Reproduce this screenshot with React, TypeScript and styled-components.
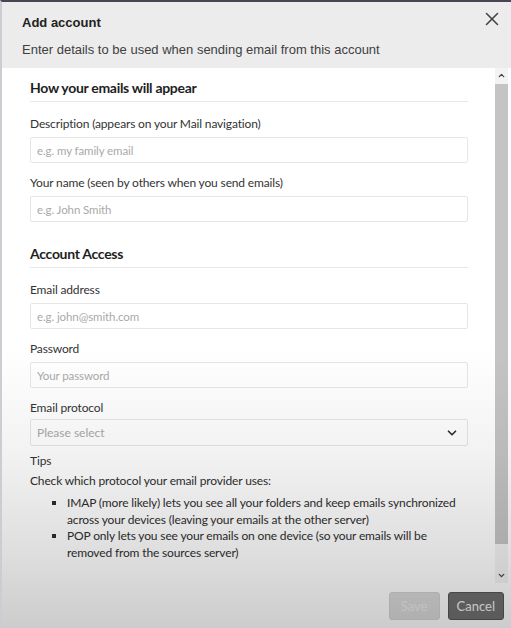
import React from 'react';
import styled, { createGlobalStyle } from 'styled-components';
import { X, ChevronDown, ChevronUp } from 'lucide-react';

const GlobalStyle = createGlobalStyle`
    html, body {
        margin: 0;
        padding: 0;
        background: #ffffff;
    }
    * {
        box-sizing: border-box;
    }
`

type FieldProps = {
    label: string;
    placeholder: string;
}

const Field: React.FunctionComponent<FieldProps> = ({label, placeholder}: FieldProps) => (
    <FieldBox>
        <Label>{label}</Label>
        <Input placeholder={placeholder} />
    </FieldBox>
)

const App: React.FunctionComponent = () => {
    return (
        <>
            <GlobalStyle />
            <Dialog>
                <Header>
                    <TitleRow>
                        <Title>Add account</Title>
                        <CloseButton aria-label='Close'>
                            <X size={22} strokeWidth={1.7} />
                        </CloseButton>
                    </TitleRow>
                    <Subtitle>Enter details to be used when sending email from this account</Subtitle>
                </Header>
                <Body>
                    <Content>
                        <Section>
                            <SectionTitle>How your emails will appear</SectionTitle>
                            <Field label='Description (appears on your Mail navigation)' placeholder='e.g. my family email' />
                            <Field label='Your name (seen by others when you send emails)' placeholder='e.g. John Smith' />
                        </Section>
                        <Section $spaced>
                            <SectionTitle>Account Access</SectionTitle>
                            <Field label='Email address' placeholder='e.g. john@smith.com' />
                            <Field label='Password' placeholder='Your password' />
                            <FieldBox>
                                <Label>Email protocol</Label>
                                <Select>
                                    <span>Please select</span>
                                    <ChevronDown size={14} strokeWidth={3} color='#333' />
                                </Select>
                            </FieldBox>
                        </Section>
                        <Tips>
                            <Label>Tips</Label>
                            <TipText>Check which protocol your email provider uses:</TipText>
                            <TipList>
                                <li>IMAP (more likely) lets you see all your folders and keep emails synchronized across your devices (leaving your emails at the other server)</li>
                                <li>POP only lets you see your emails on one device (so your emails will be removed from the sources server)</li>
                            </TipList>
                        </Tips>
                    </Content>
                    <Scrollbar>
                        <ScrollArrow><ChevronUp size={9} strokeWidth={3.5} /></ScrollArrow>
                        <ScrollTrack>
                            <Thumb />
                        </ScrollTrack>
                        <ScrollArrow><ChevronDown size={9} strokeWidth={3.5} /></ScrollArrow>
                    </Scrollbar>
                </Body>
                <Footer>
                    <Button disabled>Save</Button>
                    <Button $primary>Cancel</Button>
                </Footer>
            </Dialog>
        </>
    )
}

const Dialog = styled.div`
    position: relative;
    width: 511px;
    height: 628px;
    display: flex;
    flex-direction: column;
    background: #ffffff;
    border-top: 2px solid #4b4452;
    border-left: 2px solid #cfcbd3;
    overflow: hidden;

    &::after {
        content: '';
        position: absolute;
        inset: 0;
        pointer-events: none;
        background: linear-gradient(
            to bottom,
            rgba(0, 0, 0, 0) 0%,
            rgba(0, 0, 0, 0) 55%,
            rgba(0, 0, 0, 0.05) 72%,
            rgba(0, 0, 0, 0.13) 88%,
            rgba(0, 0, 0, 0.2) 100%
        );
    }
`

const Header = styled.div`
    height: 66px;
    flex-shrink: 0;
    background: #ececec;
    padding: 11px 8px 0 20px;
    font-family: "Liberation Sans", Arial, sans-serif;
`

const TitleRow = styled.div`
    display: flex;
    justify-content: space-between;
    align-items: center;
    height: 18px;
`

const Title = styled.div`
    font-size: 13px;
    font-weight: bold;
    color: #222;
`

const CloseButton = styled.button`
    border: none;
    background: none;
    padding: 0;
    display: flex;
    color: #444;
    margin-top: -6px;
`

const Subtitle = styled.div`
    margin-top: 11px;
    font-size: 13px;
    color: #3f3f3f;
`

const Body = styled.div`
    flex: 1;
    display: flex;
    min-height: 0;
`

const Content = styled.div`
    flex: 1;
    padding: 11px 27px 0 28px;
    font-family: Lato, "Open Sans", sans-serif;
    color: #333;
`

const Section = styled.div<{ $spaced?: boolean }>`
    display: flex;
    flex-direction: column;
    gap: 12px;
    margin-top: ${(p) => (p.$spaced ? '23px' : '0')};
`

const SectionTitle = styled.div`
    font-size: 14px;
    font-weight: bold;
    letter-spacing: -0.3px;
    color: #1e1e1e;
    line-height: 18px;
    padding-bottom: 4px;
    border-bottom: 1px solid #e8e8e8;
    margin-bottom: 2px;
`

const FieldBox = styled.div`
    display: flex;
    flex-direction: column;
    gap: 5px;
`

const Label = styled.div`
    font-size: 12px;
    letter-spacing: -0.15px;
    line-height: 16px;
    color: #333;
`

const Input = styled.input`
    height: 26px;
    border: 1px solid #e6e6e6;
    border-radius: 2px;
    padding: 0 6px;
    font-family: Lato, "Open Sans", sans-serif;
    font-size: 11.5px;
    letter-spacing: -0.1px;
    color: #333;
    background: #fff;

    &::placeholder {
        color: #a9a9a9;
    }
`

const Select = styled.div`
    height: 27px;
    margin-top: -2px;
    border: 1px solid #e6e6e6;
    border-radius: 2px;
    padding: 0 8px 0 6px;
    display: flex;
    align-items: center;
    justify-content: space-between;
    font-size: 12px;
    color: #a9a9a9;
    background: #fff;
`

const Tips = styled.div`
    margin-top: 7px;
`

const TipText = styled.div`
    margin-top: 4px;
    font-size: 12px;
    letter-spacing: -0.15px;
    line-height: 16px;
    color: #2e2e2e;
`

const TipList = styled.ul`
    margin: 6px 0 0;
    padding: 0 0 0 37px;
    list-style-type: square;
    font-size: 12px;
    letter-spacing: -0.15px;
    line-height: 16.5px;
    color: #2e2e2e;
`

const Scrollbar = styled.div`
    width: 13px;
    margin-right: 3px;
    display: flex;
    flex-direction: column;
    background: #f3f3f3;
`

const ScrollArrow = styled.div`
    height: 15px;
    display: flex;
    align-items: center;
    justify-content: center;
    color: #444;
`

const ScrollTrack = styled.div`
    flex: 1;
    display: flex;
    flex-direction: column;
`

const Thumb = styled.div`
    height: 460px;
    margin: 1px 0 0;
    background: #c4c4c4;
`

const Footer = styled.div`
    height: 45px;
    flex-shrink: 0;
    display: flex;
    justify-content: flex-end;
    align-items: flex-start;
    gap: 8px;
    padding: 9px 7px 0 0;
`

const Button = styled.button<{ $primary?: boolean }>`
    height: 28px;
    padding: 0 8px;
    min-width: 51px;
    border-radius: 3px;
    font-family: Lato, "Open Sans", sans-serif;
    font-size: 13px;
    border: 1px solid ${(p) => (p.$primary ? '#555' : '#d2d2d2')};
    background: ${(p) => (p.$primary ? '#707070' : '#dadada')};
    color: ${(p) => (p.$primary ? '#f2f2f2' : '#ececec')};
`

export default App;
